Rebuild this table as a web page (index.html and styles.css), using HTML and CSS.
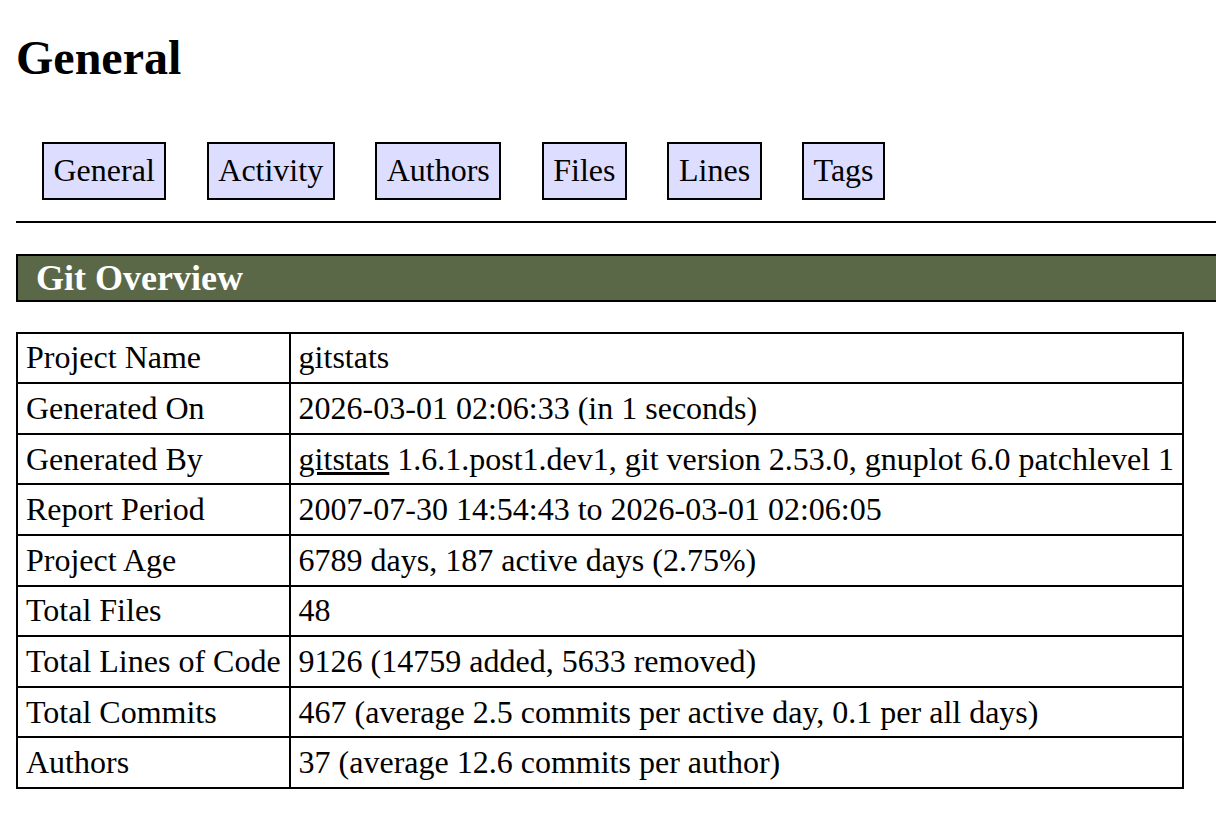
FILE: index.html
```
<!DOCTYPE html>
<html>
<head>
<meta charset="utf-8">
<title>GitStats - gitstats</title>
<link rel="stylesheet" href="styles.css">
</head>
<body>
<h1 class="title">General</h1>
<ul class="nav">
  <li class="nav-item"><a class="nav-link" href="#">General</a></li>
  <li class="nav-item"><a class="nav-link" href="#">Activity</a></li>
  <li class="nav-item"><a class="nav-link" href="#">Authors</a></li>
  <li class="nav-item"><a class="nav-link" href="#">Files</a></li>
  <li class="nav-item"><a class="nav-link" href="#">Lines</a></li>
  <li class="nav-item"><a class="nav-link" href="#">Tags</a></li>
</ul>
<hr class="rule">
<h2 class="section">Git Overview</h2>
<table class="vtable">
  <tr><th class="key">Project Name</th><td class="val">gitstats</td></tr>
  <tr><th class="key">Generated On</th><td class="val">2026-03-01 02:06:33 (in 1 seconds)</td></tr>
  <tr><th class="key">Generated By</th><td class="val"><a class="plain-link" href="#">gitstats</a> 1.6.1.post1.dev1, git version 2.53.0, gnuplot 6.0 patchlevel 1</td></tr>
  <tr><th class="key">Report Period</th><td class="val">2007-07-30 14:54:43 to 2026-03-01 02:06:05</td></tr>
  <tr><th class="key">Project Age</th><td class="val">6789 days, 187 active days (2.75%)</td></tr>
  <tr><th class="key">Total Files</th><td class="val">48</td></tr>
  <tr><th class="key">Total Lines of Code</th><td class="val">9126 (14759 added, 5633 removed)</td></tr>
  <tr><th class="key">Total Commits</th><td class="val">467 (average 2.5 commits per active day, 0.1 per all days)</td></tr>
  <tr><th class="key">Authors</th><td class="val">37 (average 12.6 commits per author)</td></tr>
</table>
</body>
</html>
```
FILE: styles.css
```
html, body {
  background: #fff;
}
body {
  margin: 0 0 0 16px;
  color: #000;
  font-family: "Liberation Serif", "Times New Roman", serif;
  font-size: 32px;
  overflow: hidden;
}
.title {
  font-size: 48px;
  font-weight: bold;
  margin: 30px 0 0 0;
  line-height: normal;
}
.nav {
  list-style: none;
  margin: 57px 0 0 0;
  padding: 0 0 0 26px;
  display: flex;
  gap: 40.5px;
}
.nav-item {
  display: block;
}
.nav-link {
  display: block;
  font-size: 32px;
  line-height: 37.6px;
  padding: 8px 9.5px;
  background: #ddf;
  border: 2px solid #000;
  color: #000;
  text-decoration: none;
}
.rule {
  border: 0;
  border-top: 2px solid #000;
  height: 0;
  margin: 21px 0 31px 0;
}
.section {
  background: #5b6848;
  color: #fff;
  font-size: 36px;
  font-weight: bold;
  line-height: normal;
  border: 2px solid #000;
  border-right: 0;
  margin: 0 0 30px 0;
  padding: 1px 0 1px 18px;
}
.vtable {
  border-collapse: collapse;
  border: 2px solid #000;
  font-size: 32px;
}
.key, .val {
  border: 2px solid #000;
  padding: 5.8px 8px;
  text-align: left;
  font-weight: normal;
  line-height: normal;
  white-space: nowrap;
}
.plain-link {
  color: #000;
  text-decoration: underline;
}
```
